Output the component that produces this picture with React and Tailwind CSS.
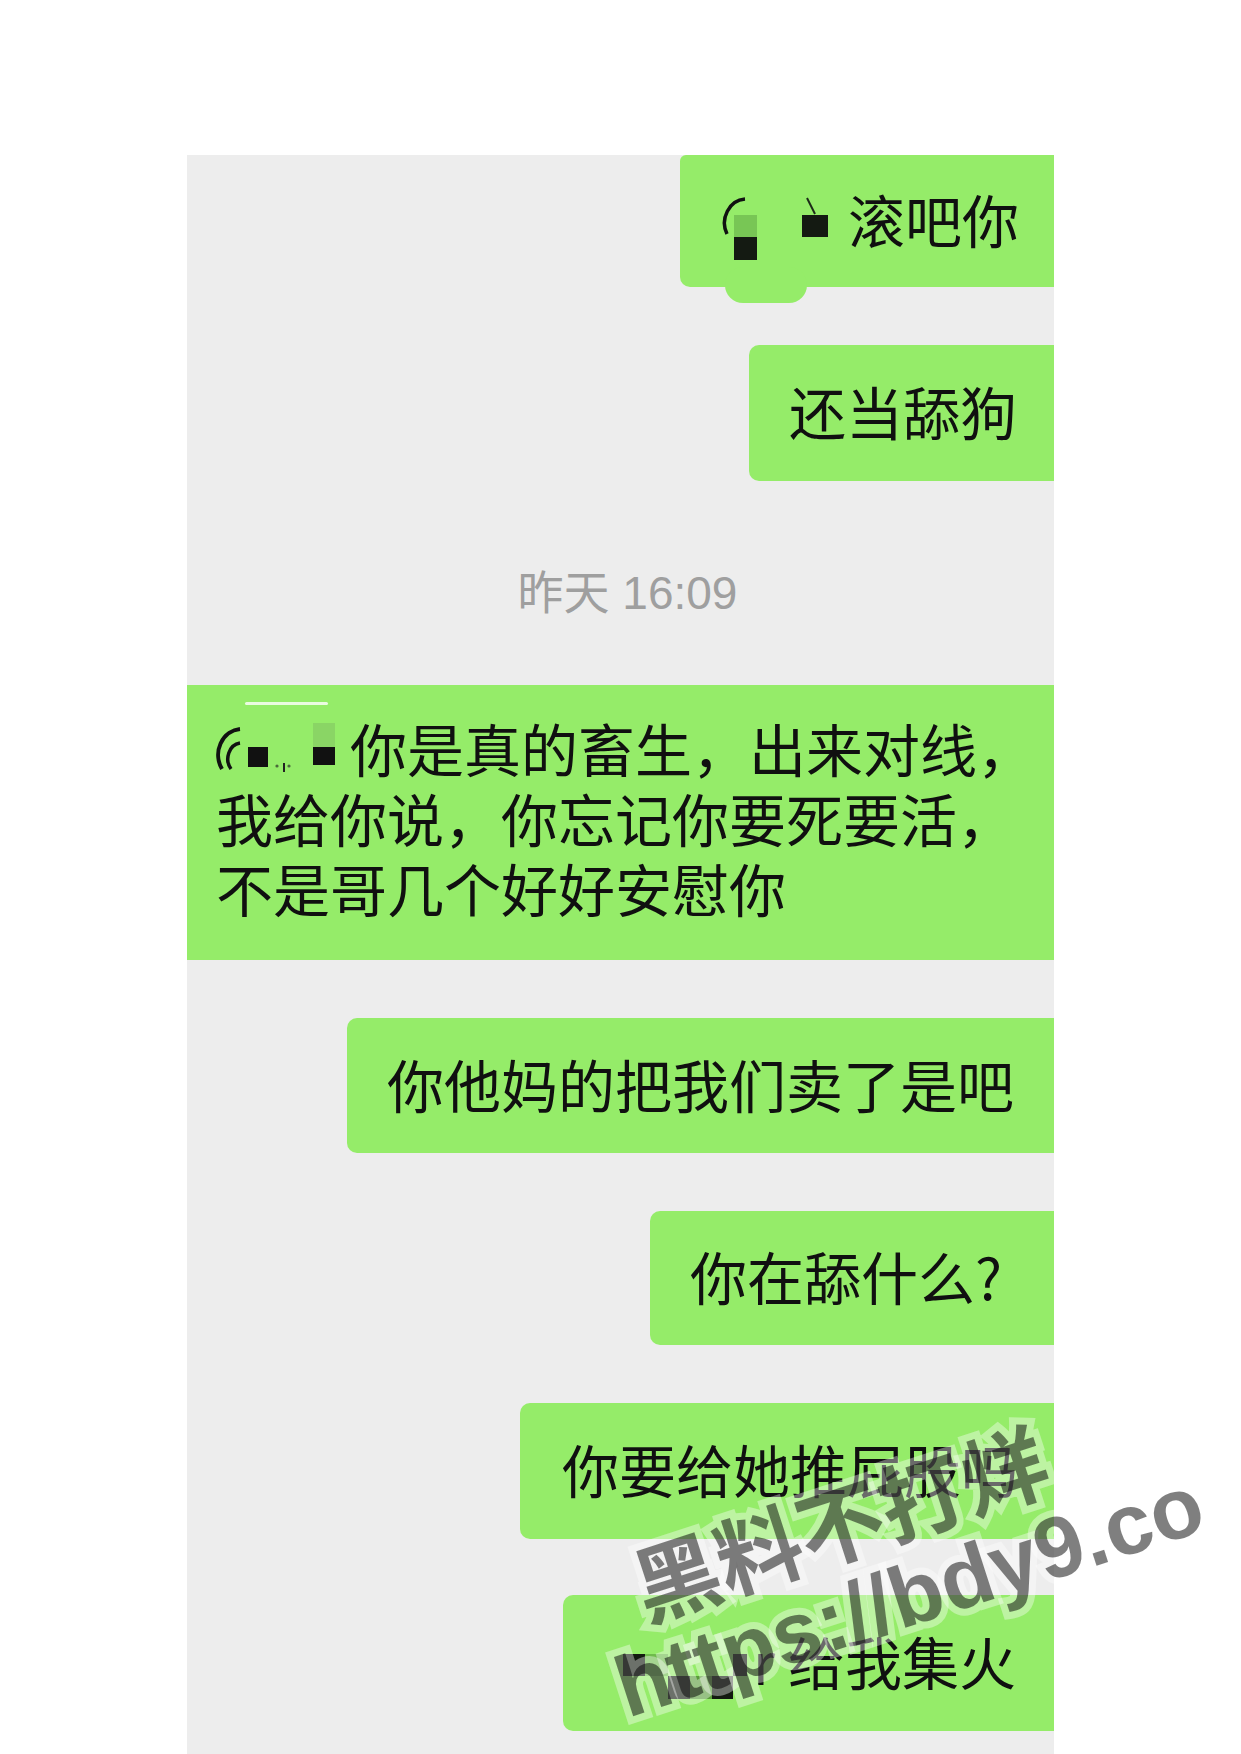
const green = 'bg-[#95ec69]'

function Bubble({ width, height = 136, pl = 40, className = '', children, extra }) {
  return (
    <div
      className={`relative flex items-center pb-[6px] ${green} rounded-l-[10px] ${className}`}
      style={{ width, height, paddingLeft: pl }}
    >
      {extra}
      <div className="flex items-center whitespace-nowrap text-[57px] leading-[70px] text-[#101010]">{children}</div>
    </div>
  )
}

// pixelated name mosaics, drawn as small svgs
function CensorOne() {
  return (
    <svg className="shrink-0 overflow-visible" width="125" height="57" viewBox="0 0 125 57">
      <path d="M22 9 A 22 24 0 0 0 4 44" fill="none" stroke="#111" strokeWidth="3.5" />
      <rect x="11" y="25" width="23" height="22" fill="#78c655" />
      <rect x="11" y="47" width="23" height="23" fill="#141a12" />
      <rect x="79" y="25" width="26" height="22" fill="#141a12" />
      <path d="M84 8 L92 24" stroke="#1c2a18" strokeWidth="2" />
    </svg>
  )
}

function CensorTwo() {
  return (
    <svg className="shrink-0 overflow-visible" width="134" height="57" viewBox="0 0 134 57">
      <path d="M24 10 A 24 26 0 0 0 6 50" fill="none" stroke="#111" strokeWidth="4" />
      <path d="M24 24 A 14 16 0 0 0 15 50" fill="none" stroke="#111" strokeWidth="3.5" />
      <rect x="32" y="28" width="20" height="20" fill="#111" />
      <circle cx="61" cy="47" r="1.6" fill="#4a6a3a" />
      <circle cx="73" cy="47" r="1.6" fill="#4a6a3a" />
      <rect x="67" y="44" width="2" height="9" fill="#222" />
      <rect x="97" y="4" width="22" height="24" fill="#8ad565" />
      <rect x="97" y="28" width="22" height="18" fill="#111" />
    </svg>
  )
}

function CensorThree() {
  return (
    <svg className="shrink-0 overflow-visible" width="138" height="57" viewBox="0 0 138 57">
      <rect x="8" y="22" width="22" height="22" fill="#131a10" />
      <rect x="30" y="22" width="23" height="22" fill="#6fbb4c" />
      <rect x="53" y="44" width="22" height="23" fill="#131a10" />
      <rect x="75" y="44" width="22" height="23" fill="#5a9c3a" />
      <rect x="97" y="44" width="21" height="23" fill="#131a10" />
      <rect x="118" y="22" width="14" height="22" fill="#131a10" />
    </svg>
  )
}

function Watermark({ text, x, y, size, family }) {
  const base = 'absolute whitespace-nowrap font-bold leading-none'
  const style = {
    left: x,
    top: y,
    fontSize: size,
    fontFamily: family,
    transform: 'translate(-50%, -50%) rotate(-18deg)',
  }
  return (
    <>
      <span
        className={`${base} text-transparent [-webkit-text-stroke:14px_rgba(255,255,255,0.38)]`}
        style={style}
      >
        {text}
      </span>
      <span className={`${base} text-[rgba(0,0,0,0.5)]`} style={style}>
        {text}
      </span>
    </>
  )
}

export default function App() {
  return (
    <div className="relative h-[1754px] w-[1241px] overflow-hidden bg-white font-['Noto_Sans_CJK_SC',sans-serif]">
      <div className="ml-[187px] mt-[155px] flex h-[1599px] w-[867px] flex-col items-end overflow-hidden bg-[#ededed]">
        <Bubble
          width={374}
          height={132}
          pl={43}
          className="rounded-tl-[6px]"
          extra={<span className={`absolute left-[45px] top-[112px] h-[36px] w-[82px] rounded-full ${green}`} />}
        >
          <CensorOne />
          <span>滚吧你</span>
        </Bubble>

        <Bubble width={305} className="mt-[58px]">
          还当舔狗
        </Bubble>

        <div className="mt-[82px] w-full pl-[14px] text-center font-['Liberation_Sans','Noto_Sans_CJK_SC',sans-serif] text-[46px] leading-[60px] text-[#9f9f9f]">
          昨天 16:09
        </div>

        <div className={`relative mt-[62px] h-[275px] w-full ${green} pl-[29px] pt-[27px] text-[57px] leading-[70px] text-[#101010]`}>
          <span className="absolute left-[58px] top-[17px] h-[3px] w-[83px] rounded-full bg-white/80" />
          <div className="flex items-center whitespace-nowrap">
            <CensorTwo />
            <span>你是真的畜生，出来对线，</span>
          </div>
          <div className="whitespace-nowrap">我给你说，你忘记你要死要活，</div>
          <div className="whitespace-nowrap">不是哥几个好好安慰你</div>
        </div>

        <Bubble width={707} height={135} className="mt-[58px]">
          你他妈的把我们卖了是吧
        </Bubble>

        <Bubble width={404} height={134} className="mt-[58px]">
          你在舔什么?
        </Bubble>

        <Bubble width={534} className="mt-[58px]" pl={42}>
          你要给她推屁股吗
        </Bubble>

        <Bubble width={491} className="mt-[56px]" pl={52}>
          <CensorThree />
          <span>r 给我集火</span>
        </Bubble>
      </div>

      <Watermark text="黑料不打烊" x={839} y={1520} size={86} family="'Noto Sans CJK SC', sans-serif" />
      <Watermark text="https://bdy9.co" x={909} y={1595} size={86} family="'Liberation Sans', Arial, sans-serif" />
    </div>
  )
}
